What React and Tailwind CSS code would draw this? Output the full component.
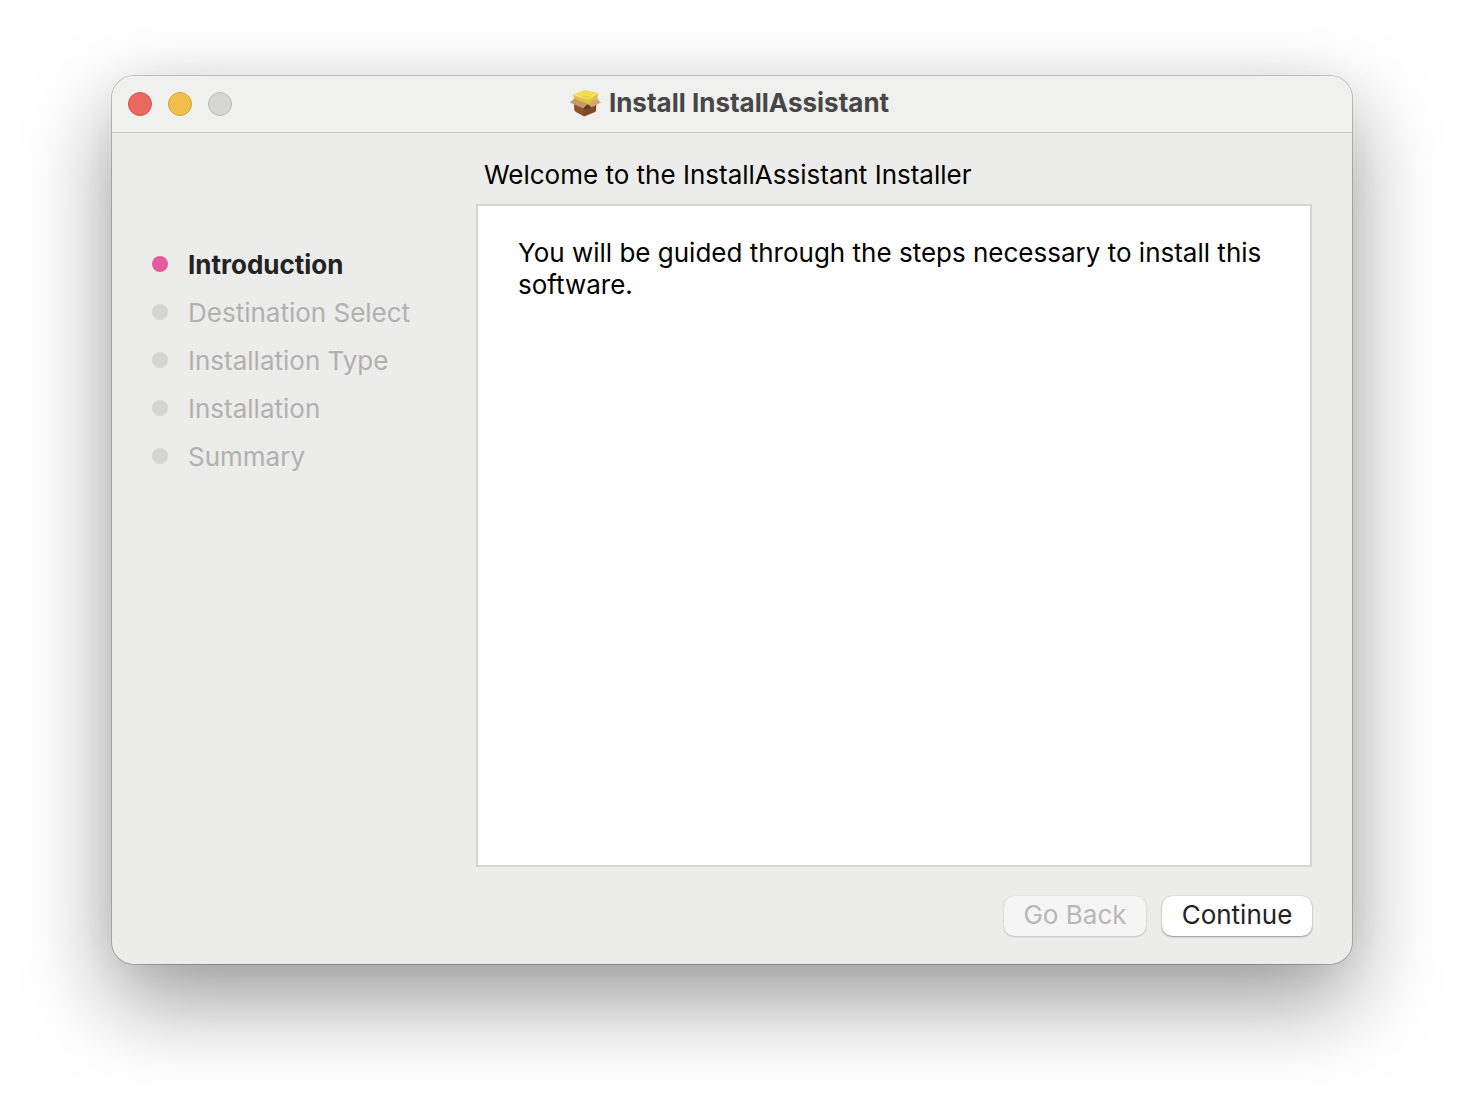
import React from 'react';
import clsx from 'clsx';

const steps = ['Introduction', 'Destination Select', 'Installation Type', 'Installation', 'Summary'];

// Open cardboard box shown next to the window title
const PackageIcon = () => (
  <svg className="h-8 w-8 shrink-0" viewBox="0 0 32 32" aria-hidden="true">
    {/* carton sides */}
    <path d="M5 16 L15 20 V29.500 L7 25 Q5.300 24 5.200 22.500 Z" fill="#8a5629" />
    <path d="M14 20 L27.500 15.500 L27 23.500 Q27 24.500 26 25 L15 29.500 Z" fill="#7a4a22" />
    {/* yellow block */}
    <path d="M4 8 L5.500 12.500 L18 17.500 L28 12.800 L29.500 6.500 L20 12 Z" fill="#dfc03b" />
    <path d="M4 7.500 L15.500 3 L30 6 L19.500 12 Z" fill="#f2de55" />
    <path d="M7.500 11 L15.500 8.500 L26 10.500 L19 14.500 Z" fill="#e6c93f" opacity="0.7" />
    <path d="M4 7.500 L19.500 12 L30 6" fill="none" stroke="#f8ec8c" strokeWidth="0.600" />
    {/* flaps */}
    <path d="M5.500 11.500 L18.500 17 L14.500 21.500 L0.800 15.500 Z" fill="#cb9768" />
    <path d="M18.500 17 L28.500 12 L31.800 15.500 L22.500 20.500 Z" fill="#d5a375" />
    <path d="M18.500 17 L14.500 21.500 L16 22 L22.500 20.500 Z" fill="#65391a" />
  </svg>
);

const TitleBar = () => (
  <header className="grid h-[57px] grid-cols-[1fr_auto_1fr] items-center border-b border-[#c9c9c8] bg-[#f0f0ee] px-4">
    <div className="flex gap-4">
      <button type="button" aria-label="Close" className="size-6 rounded-full border border-[#d3544b] bg-[#e9695e]" />
      <button type="button" aria-label="Minimize" className="size-6 rounded-full border border-[#d5a23c] bg-[#f2be4b]" />
      <button type="button" aria-label="Zoom" disabled className="size-6 rounded-full border border-[#bababa] bg-[#d6d6d5]" />
    </div>
    <div className="flex items-center gap-2 pr-1.5 pb-0.5">
      <PackageIcon />
      <h1 className="text-[26px] leading-8 font-bold text-[#474747]">Install InstallAssistant</h1>
    </div>
  </header>
);

const StepList = ({ current }) => (
  <nav aria-label="Installer steps" className="w-[364px] shrink-0 pt-[107px] pl-10">
    <ol>
      {steps.map((step, i) => (
        <li
          key={step}
          aria-current={i === current ? 'step' : undefined}
          className={clsx(
            'flex h-12 items-center gap-5 text-[26px] leading-8',
            i === current ? 'font-bold text-[#232323]' : 'text-[#b1b1b0]'
          )}
        >
          <span className={clsx('size-4 rounded-full', i === current ? 'bg-[#e45c9c]' : 'bg-[#d6d6d5]')} />
          <span className="pt-0.5">{step}</span>
        </li>
      ))}
    </ol>
  </nav>
);

export default function App() {
  return (
    <div className="flex min-h-screen flex-col bg-white px-28 pt-[76px] pb-[148px] font-['Inter',sans-serif]">
      <main className="flex grow flex-col overflow-hidden rounded-[22px] bg-[#ececea] shadow-[0_0_0_1px_rgba(0,0,0,0.2),0_36px_90px_rgba(0,0,0,0.4),0_0_40px_rgba(0,0,0,0.03)]">
        <TitleBar />
        <div className="flex grow">
          <StepList current={0} />
          <section className="flex grow flex-col pt-[26px] pr-10 pb-7">
            <h2 className="pl-2 text-[26px] leading-8 text-black">Welcome to the InstallAssistant Installer</h2>
            <div className="mt-[13px] grow border-2 border-[#d5d5d5] bg-white px-10 py-[31px]">
              <p className="text-[26px] leading-8 text-black">
                You will be guided through the steps necessary to install this software.
              </p>
            </div>
            <div className="mt-[29px] flex justify-end gap-4">
              <button
                type="button"
                disabled
                className="h-10 w-[142px] rounded-[10px] bg-[#f5f5f5] pb-0.5 text-[26px] leading-8 text-[#b8b8b8] shadow-[0_0_1px_rgba(0,0,0,0.2),0_1px_2px_rgba(0,0,0,0.15)]"
              >
                Go Back
              </button>
              <button
                type="button"
                className="h-10 w-[150px] rounded-[10px] bg-white pb-0.5 text-[26px] leading-8 text-[#232323] shadow-[0_0_1px_rgba(0,0,0,0.3),0_1px_2px_rgba(0,0,0,0.35)]"
              >
                Continue
              </button>
            </div>
          </section>
        </div>
      </main>
    </div>
  );
}
